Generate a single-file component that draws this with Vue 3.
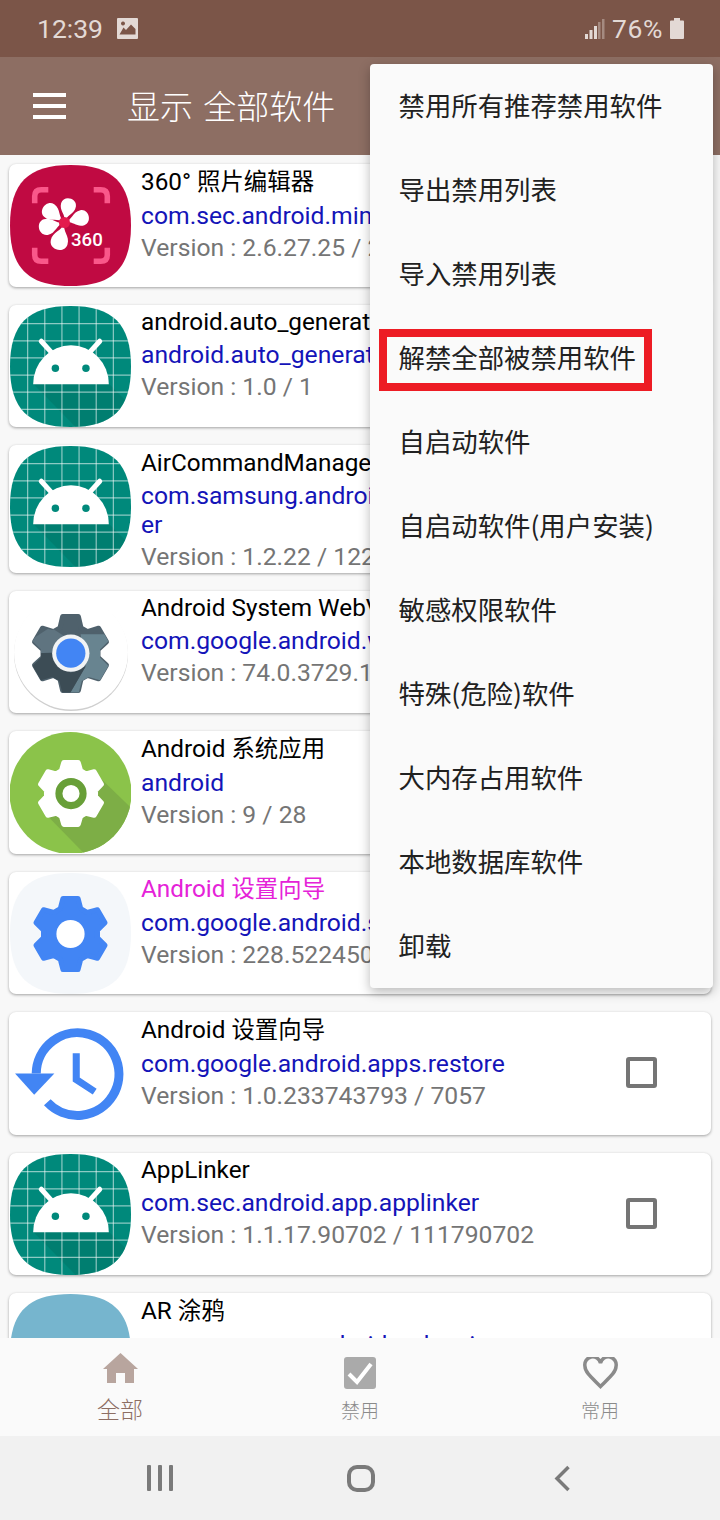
<script setup>
function gear(cx, cy, ro, ri, n = 6, rot = -90, tip = 0.2, root = 0.37) {
  let d = ''
  const step = 360 / n
  const pts = []
  for (let i = 0; i < n; i++) {
    const a = rot + i * step
    pts.push([ri, a - step * root], [ro, a - step * tip], [ro, a + step * tip], [ri, a + step * root])
  }
  pts.forEach(([r, a], i) => {
    const t = (a * Math.PI) / 180
    d += (i ? 'L' : 'M') + (cx + r * Math.cos(t)).toFixed(2) + ' ' + (cy + r * Math.sin(t)).toFixed(2)
  })
  return d + 'Z'
}
const squircle = 'M60 0C102 0 120 18 120 60C120 102 102 120 60 120C18 120 0 102 0 60C0 18 18 0 60 0Z'
const gridLines = [17.500, 34.500, 51.500, 68.500, 85.500, 102.500]
const petals = [
  { a: 13, s: 1 },
  { a: 75, s: 1.02 },
  { a: 195, s: 1.14 },
  { a: 256, s: 1.06 },
  { a: 308, s: 1.06 }
]
const petal = 'M0 0C0 -8 -8 -10 -7.500 -18C-7 -26.500 7 -26.500 7.500 -18C8 -10 0 -8 0 0Z'
const webGear = gear(60, 61, 37.500, 27.500)
const webClip = gear(60, 61, 39.500, 29.500)
const greenGear = gear(60.500, 61, 31.500, 24.500, 6, -90, 0.22, 0.38)
const blueGear = gear(60, 60.500, 36, 27)

const apps = [
  { icon: '360', title: '360° ', cn: '照片编辑器', pkg: 'com.sec.android.mimage.photoretouching', ver: 'Version : 2.6.27.25 / 20627025' },
  { icon: 'droid', title: 'android.auto_generated_rro__', pkg: 'android.auto_generated_rro__', ver: 'Version : 1.0 / 1' },
  { icon: 'droid', title: 'AirCommandManager', pkg: 'com.samsung.android.service.aircommand', pkgEnd: 'er', ver: 'Version : 1.2.22 / 122' },
  { icon: 'web', title: 'Android System WebView', pkg: 'com.google.android.webview', ver: 'Version : 74.0.3729.157 / 372915700' },
  { icon: 'sys', title: 'Android ', cn: '系统应用', pkg: 'android', ver: 'Version : 9 / 28' },
  { icon: 'setup', title: 'Android ', cn: '设置向导', pkg: 'com.google.android.setupwizard', ver: 'Version : 228.522450 / 228', magenta: true },
  { icon: 'restore', title: 'Android ', cn: '设置向导', pkg: 'com.google.android.apps.restore', ver: 'Version : 1.0.233743793 / 7057' },
  { icon: 'droid', title: 'AppLinker', pkg: 'com.sec.android.app.applinker', ver: 'Version : 1.1.17.90702 / 111790702' },
  { icon: 'ar', title: 'AR ', cn: '涂鸦', pkg: 'com.samsung.android.ardrawing', ver: 'Version : 1.0 / 1' }
]
const menu = ['禁用所有推荐禁用软件', '导出禁用列表', '导入禁用列表', '解禁全部被禁用软件', '自启动软件', '自启动软件(用户安装)', '敏感权限软件', '特殊(危险)软件', '大内存占用软件', '本地数据库软件', '卸载']
</script>

<template>
  <div class="screen">
    <header class="status">
      <div class="status-left">
        <span>12:39</span>
        <svg width="21" height="21" viewBox="0 0 21 21"><path fill="#e3d9d5" fill-rule="evenodd" d="M1 0H20a1 1 0 0 1 1 1V20a1 1 0 0 1-1 1H1a1 1 0 0 1-1-1V1a1 1 0 0 1 1-1ZM2.500 16.500H18.500V11L14 6.500 9 12 6.500 9.500ZM6 3.500a2 2 0 1 0 .01 0Z"/></svg>
      </div>
      <div class="status-right">
        <svg width="20" height="20" viewBox="0 0 20 20"><g fill="#e3d9d5"><rect x="0" y="15" width="3" height="5"/><rect x="4.500" y="11" width="3" height="9"/><rect x="9" y="7" width="3" height="13"/></g><g fill="#a58a80"><rect x="13" y="3" width="2.500" height="17"/><rect x="17" y="0" width="2.500" height="20"/></g></svg>
        <span class="pct">76%</span>
        <svg width="14" height="21" viewBox="0 0 14 21"><path fill="#e3d9d5" d="M4 0H10V2.500H13a1 1 0 0 1 1 1V20a1 1 0 0 1-1 1H1a1 1 0 0 1-1-1V3.500a1 1 0 0 1 1-1H4Z"/></svg>
      </div>
    </header>

    <div class="appbar">
      <div class="burger"><i></i><i></i><i></i></div>
      <div class="appbar-title">显示 全部软件</div>
    </div>

    <main class="list">
      <article v-for="(a, i) in apps" :key="i" class="card">
        <svg class="app-icon" viewBox="0 0 120 120">
          <defs>
            <clipPath :id="'sq' + i"><path :d="squircle"/></clipPath>
            <clipPath :id="'gw' + i"><path :d="webClip"/></clipPath>
            <clipPath :id="'ci' + i"><circle cx="60" cy="60.500" r="60.500"/></clipPath>
          </defs>

          <template v-if="a.icon === '360'">
            <path :d="squircle" fill="#c00a42"/>
            <g fill="none" stroke="#f9588a" stroke-width="5.500" stroke-linecap="butt">
              <path d="M24.500 38V31Q24.500 24.500 31 24.500H38"/>
              <path d="M83 24.500H90Q96.500 24.500 96.500 31V38"/>
              <path d="M24.500 82V89Q24.500 95.500 31 95.500H38"/>
              <path d="M83 95.500H90Q96.500 95.500 96.500 89V82"/>
            </g>
            <path v-for="p in petals" :key="p.a" :d="petal" fill="#fff" :transform="`translate(54 57) rotate(${p.a}) scale(${p.s})`"/>
            <circle cx="54" cy="57" r="5.500" fill="#e31b4e"/>
            <text x="60.500" y="80" class="t360">360</text>
          </template>

          <template v-else-if="a.icon === 'droid'">
            <path :d="squircle" fill="#00897b"/>
            <g :clip-path="`url(#sq${i})`">
              <path d="M23 77H98L125 104V125H70Z" fill="#00695c" fill-opacity="0.350"/>
              <g stroke="#ffffff" stroke-opacity="0.550" stroke-width="1.200">
                <path v-for="g in gridLines" :key="'v' + g" :d="`M${g} 0V120`"/>
                <path v-for="g in gridLines" :key="'h' + g" :d="`M0 ${g}H120`"/>
              </g>
            </g>
            <g stroke="#fff" stroke-width="5" stroke-linecap="round"><path d="M31 35L42 47"/><path d="M89 35L78 47"/></g>
            <path d="M23 77.500A37.500 38.500 0 0 1 98 77.500Z" fill="#fff"/>
            <circle cx="45" cy="61.700" r="3.700" fill="#00897b"/>
            <circle cx="75.300" cy="61.700" r="3.700" fill="#00897b"/>
          </template>

          <template v-else-if="a.icon === 'web'">
            <circle cx="60.500" cy="61.500" r="56.500" fill="#cfcfcf"/>
            <circle cx="60.500" cy="60" r="56.500" fill="#fff"/>
            <path :d="webGear" fill="#4f616c" stroke="#4f616c" stroke-width="5" stroke-linejoin="round"/>
            <g :clip-path="`url(#gw${i})`">
              <path d="M70 42L100 42 100 103 58 103 75 74Z" fill="#688490"/>
              <path d="M20 60L44 60 60 80 75 74 58 103 20 103Z" fill="#3c4c55"/>
              <path d="M20 48L40 35 56 45 44 60 20 61Z" fill="#5f7480"/>
            </g>
            <circle cx="60.300" cy="60.700" r="18.500" fill="#f1f3f4"/>
            <circle cx="60.300" cy="60.700" r="14.500" fill="#4285f4"/>
          </template>

          <template v-else-if="a.icon === 'sys'">
            <circle cx="60" cy="60.500" r="60.500" fill="#8bc34a"/>
            <g :clip-path="`url(#ci${i})`">
              <path d="M37 83L90 46 125 80V125H78Z" fill="#7dae46"/>
            </g>
            <path :d="greenGear" fill="#fff" stroke="#fff" stroke-width="5" stroke-linejoin="round"/>
            <circle cx="60.500" cy="61" r="12" fill="#fff" stroke="#689f38" stroke-width="7"/>
          </template>

          <template v-else-if="a.icon === 'setup'">
            <path :d="squircle" fill="#f4f7fa"/>
            <path :d="blueGear" fill="#4285f4" stroke="#4285f4" stroke-width="5" stroke-linejoin="round"/>
            <circle cx="60" cy="60.500" r="14" fill="#fff"/>
          </template>

          <template v-else-if="a.icon === 'restore'">
            <g fill="none" stroke="#4285f4">
              <path stroke-width="9" d="M26 60A41 41 0 1 1 37 88.500"/>
              <path stroke-width="7" d="M65.700 40V66L84 78"/>
            </g>
            <path d="M5 60H44L24 81Z" fill="#4285f4"/>
          </template>

          <template v-else>
            <path :d="squircle" fill="#76b5ce"/>
          </template>
        </svg>

        <div class="texts">
          <div class="title" :class="{ magenta: a.magenta }">{{ a.title }}<span v-if="a.cn" class="cn">{{ a.cn }}</span></div>
          <div class="pkg">{{ a.pkg }}<template v-if="a.pkgEnd"><br>{{ a.pkgEnd }}</template></div>
          <div class="ver">{{ a.ver }}</div>
        </div>
        <span class="check"></span>
      </article>
    </main>

    <nav class="tabs">
      <div class="tab active">
        <svg width="35" height="30" viewBox="0 0 35 30"><path fill="#b8a59e" d="M17.500 0L35 16H31V30H22V20H13V30H4V16H0Z"/></svg>
        <span>全部</span>
      </div>
      <div class="tab">
        <svg width="32" height="32" viewBox="0 0 32 32"><rect width="32" height="32" rx="3" fill="#aaaaaa"/><path d="M5 17L13 25 27 7" fill="none" stroke="#fff" stroke-width="4"/></svg>
        <span>禁用</span>
      </div>
      <div class="tab">
        <svg width="35" height="32" viewBox="0 0 35 32"><path fill="none" stroke="#8a8a8a" stroke-width="3.500" d="M17.500 29.500C8 20 2 15 2 9.500A7.800 7.800 0 0 1 17.500 6 7.800 7.800 0 0 1 33 9.500C33 15 27 20 17.500 29.500Z"/></svg>
        <span>常用</span>
      </div>
    </nav>

    <footer class="sysnav">
      <div class="recent"><i></i><i></i><i></i></div>
      <div class="home"></div>
      <svg class="back" width="17" height="27" viewBox="0 0 17 27"><path d="M14.500 2L3 13.500 14.500 25" fill="none" stroke="#7a7a7a" stroke-width="3.500"/></svg>
    </footer>

    <div class="menu">
      <div v-for="m in menu" :key="m" class="menu-item">{{ m }}</div>
    </div>
    <div class="highlight"></div>
  </div>
</template>

<style>
html, body { margin: 0; padding: 0; }
</style>

<style scoped>
.screen {
  position: relative;
  width: 720px;
  height: 1520px;
  overflow: hidden;
  display: flex;
  flex-direction: column;
  background: #f8f8f8;
  font-family: Roboto, "Noto Sans CJK SC", sans-serif;
}
.status {
  height: 57px;
  flex: none;
  background: #7b5548;
  display: flex;
  justify-content: space-between;
  align-items: center;
  padding: 0 36px 0 37px;
  box-sizing: border-box;
  color: #e3d9d5;
  font-size: 26.500px;
}
.status-left, .status-right { display: flex; align-items: center; }
.status-left { gap: 14px; }
.status-right { gap: 7px; }
.pct { letter-spacing: .6px; }
.appbar {
  height: 98px;
  flex: none;
  background: #8d6e63;
  display: flex;
  align-items: center;
  padding-left: 33px;
  color: #fff;
}
.burger { width: 33px; display: flex; flex-direction: column; gap: 7px; margin-right: 61px; margin-top: -1px; }
.burger i { display: block; height: 4px; background: #fff; }
.appbar-title { font-size: 33px; line-height: 44px; margin-top: -3px; word-spacing: 3px; font-family: "Noto Sans CJK SC", sans-serif; font-weight: 300; white-space: nowrap; }
.list {
  flex: 1;
  min-height: 0;
  overflow: hidden;
  display: flex;
  flex-direction: column;
  gap: 18px;
  padding: 9px 9px 0;
}
.card {
  flex: none;
  min-height: 122.500px;
  box-sizing: border-box;
  background: #fff;
  border-radius: 7px;
  box-shadow: 0 1px 3px rgba(0, 0, 0, .35);
  display: flex;
  align-items: flex-start;
  padding-left: 1px;
}
.app-icon { width: 121px; height: 121px; flex: none; margin-top: 1px; display: block; }
.t360 { font: 500 18.500px Roboto, sans-serif; fill: #fff; }
.texts { flex: 1; min-width: 0; margin-left: 10px; padding: 2.500px 0 2px; }
.title, .pkg, .ver { font-size: 24.700px; line-height: 29px; white-space: nowrap; }
.title { color: #000; font-size: 24.300px; margin-bottom: 4px; }
.cn { font-size: 23.400px; }
.title.magenta { color: #e522d8; }
.pkg { color: #1414b8; margin-bottom: 3px; }
.ver { color: #757575; }
.check {
  flex: none;
  width: 31px;
  height: 31px;
  box-sizing: border-box;
  border: 4px solid #757575;
  border-radius: 3px;
  margin: 45px 54px 0 16px;
}
.tabs {
  height: 98px;
  flex: none;
  background: #fafafa;
  display: grid;
  grid-template-columns: repeat(3, 1fr);
  position: relative;
}
.tab {
  display: flex;
  flex-direction: column;
  align-items: center;
  padding-top: 19px;
  color: #8a8a8a;
  font-size: 19px;
  line-height: 28px;
  font-family: "Noto Sans CJK SC", sans-serif;
  font-weight: 300;
}
.tab span { margin-top: 7px; }
.tab.active { padding-top: 15px; color: #8d6e63; font-size: 23px; }
.tab.active span { margin-top: 11px; }
.sysnav {
  height: 84px;
  flex: none;
  background: #f1f1f1;
  display: grid;
  grid-template-columns: repeat(3, 200px);
  justify-content: center;
  justify-items: center;
  align-items: center;
}
.recent { display: flex; gap: 7px; }
.recent i { display: block; width: 4px; height: 26px; background: #7a7a7a; border-radius: 1px; }
.home { width: 28px; height: 27px; box-sizing: border-box; border: 4px solid #7a7a7a; border-radius: 10px; margin-left: 2px; }
.back { margin-left: 4px; }
.menu {
  position: absolute;
  left: 370px;
  top: 64px;
  width: 343px;
  background: #fafafa;
  border-radius: 4px;
  box-shadow: 0 4px 12px rgba(0, 0, 0, .28);
}
.menu-item {
  height: 84px;
  box-sizing: border-box;
  display: flex;
  align-items: center;
  padding: 0 0 3px 28.500px;
  font-size: 26.400px;
  color: #212121;
  font-family: "Noto Sans CJK SC", sans-serif;
  font-weight: 400;
  white-space: nowrap;
}
.highlight {
  position: absolute;
  left: 379px;
  top: 329px;
  width: 273px;
  height: 62px;
  box-sizing: border-box;
  border: 8px solid #ed1c24;
}
</style>
